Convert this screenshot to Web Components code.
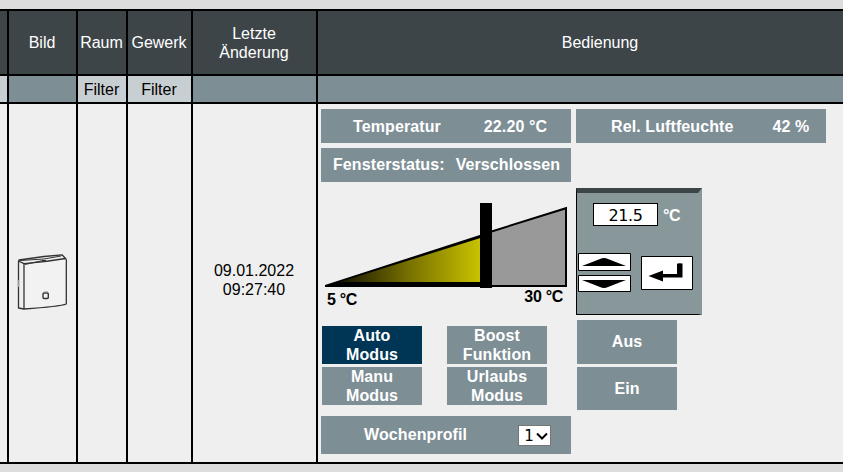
<!DOCTYPE html>
<html lang="de">
<head>
<meta charset="utf-8">
<title>Raumthermostat</title>
<style>
html,body{margin:0;width:843px;height:472px;overflow:hidden;background:#ddd}
body{font:16px/19px "Liberation Sans",Arial,sans-serif}
</style>
</head>
<body>
<device-page></device-page>
<script>
function define(name, html) {
  const t = document.createElement('template');
  t.innerHTML = html;
  customElements.define(name, class extends HTMLElement {
    constructor() {
      super();
      this.attachShadow({mode: 'open'}).appendChild(t.content.cloneNode(true));
    }
  });
}

define('table-cell', `<style>
:host{display:flex;align-items:center;justify-content:center;text-align:center;background:#efefef;color:#000;overflow:hidden;min-width:0;box-sizing:border-box}
:host([kind=head]){background:#3e4549;color:#fff;padding-right:1px}
:host([kind=bar]){background:#7e8e95}
:host([kind=filter]){background:#c8cfd3;padding-right:1px}
:host([kind=body]){padding:0 1px 6px 0}
:host([kind=panel]){justify-content:flex-start;align-items:flex-start;text-align:left}
</style><slot></slot>`);

define('info-bar', `<style>
:host{display:flex;align-items:center;background:#7e8e95;color:#fff;font-weight:bold;white-space:pre;box-sizing:border-box;padding-left:var(--start,0);padding-bottom:var(--lift,1px);gap:var(--space,0);letter-spacing:.1px}
</style><slot></slot><slot name="value"></slot>`);

define('mode-button', `<style>
:host{display:flex;align-items:center;justify-content:center;text-align:center;background:#7e8e95;color:#fff;font-weight:bold;letter-spacing:.1px;cursor:pointer;box-sizing:border-box}
:host([active]){background:#003655}
</style><slot></slot>`);

define('device-picture', `<style>:host{display:block;width:67px;height:80px}svg{display:block}</style>
<svg width="67" height="80" viewBox="9 240 67 80" fill="none" stroke="#333" stroke-width="1.3" stroke-linejoin="round">
<path d="M24 263.7Q45 262 65.5 258.5Q66.8 259 66.3 263V304Q60 306.5 24 309Z" fill="#f2f2f2"/>
<path d="M24 263.7L18.5 261L19 260L44 256.5L62 254.8L65.5 258.5M18.5 261V308L24 309"/>
<path d="M20 260.5L44 259L61 256M42 260.5H46M25 264.5L43 260.5" stroke-width="1"/>
<path d="M18.5 280V287" stroke="#999"/>
<rect x="43" y="293" width="5.3" height="5.5" rx="1" stroke-width="1.4"/>
<path d="M44 291.8H48" stroke="#aaa" stroke-width="1"/>
</svg>`);

define('temperature-slider', `<style>
:host{display:grid;grid-template-rows:101px 27px;color:#000;font-weight:bold}
svg{display:block}
.labels{display:flex;justify-content:space-between;padding:0 8px 0 6px;align-items:flex-start;letter-spacing:-.3px}
.labels span:first-child{margin-top:2px}
.labels span:last-child{margin-top:-1px}
</style>
<svg width="250" height="101" viewBox="321 187 250 101">
<defs><linearGradient id="g" gradientUnits="userSpaceOnUse" x1="336" x2="482" y1="0" y2="0"><stop offset="0" stop-color="#101000"/><stop offset=".12" stop-color="#292600"/><stop offset=".5" stop-color="#777100"/><stop offset="1" stop-color="#cbc400"/></linearGradient></defs>
<path d="M486 233.2L566 208.2V286H486Z" fill="#999" stroke="#000" stroke-width="2"/>
<path d="M325 285L486 233V287H325Z" fill="#000"/>
<path d="M338 282.5L482 237.5V282H338Z" fill="url(#g)"/>
<path d="M480 203h12v85h-12z" fill="#000"/>
</svg>
<div class="labels"><span>5 °C</span><span>30 °C</span></div>`);

define('setpoint-control', `<style>
:host{display:grid;grid-template-rows:27px 1fr;width:126px;height:127px;margin-top:1px;box-sizing:border-box;background:#87979a;border-top:5px solid #3e4549;border-left:1px solid #000;border-bottom:1px solid #000;border-right:4px solid #87979a;padding:10px 0 0 1px;color:#fff;font-weight:bold}
.set{display:flex;align-items:flex-start;padding-left:15px;gap:5px}
.num{box-sizing:border-box;width:65px;height:23px;border:1px solid #000;background:#fff;color:#000;font:16px/23px "DejaVu Sans",Verdana,sans-serif;letter-spacing:-.4px;text-align:center}
.unit{margin-top:3px;letter-spacing:-.3px}
.keys{display:grid;grid-template-columns:53px 52px;gap:10px;padding-top:23px}
.step{display:grid;grid-template-rows:18px 17px;gap:4px;align-content:start}
svg{display:block}
.enter{margin-top:3px}
</style>
<div class="set"><div class="num">21.5</div><span class="unit">°C</span></div>
<div class="keys"><div class="step">
<svg width="53" height="18"><path d="M.5.5h52v17h-52z" fill="#fff" stroke="#000"/><path d="M4 13L22 6Q26 4 30 6L48 13Z"/></svg>
<svg width="53" height="17"><path d="M.5.5h52v16h-52z" fill="#fff" stroke="#000"/><path d="M4 5L22 12Q26 14 30 12L48 5Z"/></svg>
</div>
<svg class="enter" width="52" height="34"><path d="M.5.5h51v33h-51z" fill="#fff" stroke="#000"/><path d="M7.5 20L22 14.5V18H36V8Q36 7 41.5 7.5V21.5H22V25.5Z"/></svg>
</div>`);

define('profile-select', `<style>
:host{display:flex;align-items:center;justify-content:space-between;width:33px;height:21px;box-sizing:border-box;background:#fff;border:1px solid #767676;color:#000;font:15px/19px "DejaVu Sans",Verdana,sans-serif;letter-spacing:0;padding:1px 2px 0 5px;margin-top:2px}
</style><span>1</span><svg width="12" height="9" fill="none" stroke="#000" stroke-width="2"><path d="M1 1.5L6 6.5L11 1.5"/></svg>`);

define('operation-panel', `<style>
:host{display:grid;grid-template-columns:250px 250px;grid-template-rows:34px 34px 128px 91px 38px;gap:5px;padding:5px 3px}
.modes{display:grid;grid-template-columns:100px 100px;grid-template-rows:38px 38px;column-gap:25px;row-gap:3px;padding:6px 1px 0;align-content:start}
.power{display:grid;grid-template-columns:100px;grid-template-rows:44px 43px;row-gap:3px;padding-left:1px;align-content:start}
.power mode-button:first-child{padding-bottom:1px}
.first{grid-column:1}
</style>
<info-bar style="--start:32px;--space:43px;--lift:0px">Temperatur<span slot="value">22.20 °C</span></info-bar>
<info-bar style="--start:35px;--space:39px;--lift:0px">Rel. Luftfeuchte<span slot="value">42 %</span></info-bar>
<info-bar class="first" style="--start:12px;--space:11px">Fensterstatus:<span slot="value">Verschlossen</span></info-bar>
<temperature-slider class="first"></temperature-slider>
<setpoint-control></setpoint-control>
<div class="modes">
<mode-button active>Auto<br>Modus</mode-button><mode-button>Boost<br>Funktion</mode-button>
<mode-button>Manu<br>Modus</mode-button><mode-button>Urlaubs<br>Modus</mode-button>
</div>
<div class="power"><mode-button>Aus</mode-button><mode-button>Ein</mode-button></div>
<info-bar class="first" style="--start:43px;--space:51px">Wochenprofil<profile-select slot="value"></profile-select></info-bar>`);

define('device-page', `<style>
:host{display:block;padding-top:9px;width:843px;box-sizing:border-box}
.table{display:grid;grid-template-columns:7px 67px 48px 63px 123px 525px;grid-template-rows:63px 26px 358px;gap:2px;padding:2px 0;background:#000}
</style>
<div class="table">
<table-cell kind="head"></table-cell><table-cell kind="head">Bild</table-cell><table-cell kind="head">Raum</table-cell><table-cell kind="head">Gewerk</table-cell><table-cell kind="head"><span>Letzte<br>Änderung</span></table-cell><table-cell kind="head" style="padding-left:40px">Bedienung</table-cell>
<table-cell kind="filter"></table-cell><table-cell kind="bar"></table-cell><table-cell kind="filter">Filter</table-cell><table-cell kind="filter">Filter</table-cell><table-cell kind="bar"></table-cell><table-cell kind="bar"></table-cell>
<table-cell></table-cell><table-cell kind="body"><device-picture></device-picture></table-cell><table-cell></table-cell><table-cell></table-cell><table-cell kind="body"><span>09.01.2022<br>09:27:40</span></table-cell><table-cell kind="panel"><operation-panel></operation-panel></table-cell>
</div>`);
</script>
</body>
</html>
